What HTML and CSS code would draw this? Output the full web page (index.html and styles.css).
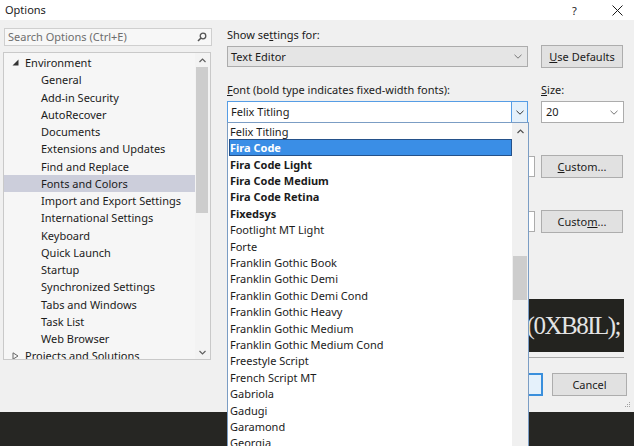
FILE: index.html
```html
<!DOCTYPE html>
<html>
<head>
<meta charset="utf-8">
<link rel="stylesheet" href="styles.css">
</head>
<body>
<div class="window">
  <div class="titlebar">
    <span class="title">Options</span>
    <span class="help">?</span>
    <svg class="close" width="11" height="11" viewBox="0 0 11 11"><path d="M0.5 0.5 L10.5 10.5 M10.5 0.5 L0.5 10.5" stroke="#1a1a1a" stroke-width="1" fill="none"/></svg>
  </div>
  <div class="main">
    <div class="left">
      <div class="search">
        <span class="placeholder">Search Options (Ctrl+E)</span>
        <svg width="10" height="10" viewBox="0 0 10 10"><circle cx="6" cy="4" r="2.8" stroke="#555" stroke-width="1.3" fill="none"/><path d="M4 6 L1 9" stroke="#555" stroke-width="1.6"/></svg>
      </div>
      <div class="tree">
        <div class="tree-list">
          <div class="node"><svg class="tri" width="7" height="7" viewBox="0 0 7 7"><path d="M6.5 0.5 L6.5 6.5 L0.5 6.5 Z" fill="#333"/></svg>Environment</div>
          <div class="leaf">General</div>
          <div class="leaf">Add-in Security</div>
          <div class="leaf">AutoRecover</div>
          <div class="leaf">Documents</div>
          <div class="leaf">Extensions and Updates</div>
          <div class="leaf">Find and Replace</div>
          <div class="leaf selected">Fonts and Colors</div>
          <div class="leaf">Import and Export Settings</div>
          <div class="leaf">International Settings</div>
          <div class="leaf">Keyboard</div>
          <div class="leaf">Quick Launch</div>
          <div class="leaf">Startup</div>
          <div class="leaf">Synchronized Settings</div>
          <div class="leaf">Tabs and Windows</div>
          <div class="leaf">Task List</div>
          <div class="leaf">Web Browser</div>
          <div class="node"><svg class="tri" width="7" height="8" viewBox="0 0 7 8"><path d="M1 0.8 L6 4 L1 7.2 Z" stroke="#666" stroke-width="1" fill="none"/></svg>Projects and Solutions</div>
        </div>
        <div class="vscroll">
          <div class="arrow"><svg width="7" height="5" viewBox="0 0 7 5"><path d="M0.5 4 L3.5 1 L6.5 4" stroke="#606060" stroke-width="1.2" fill="none"/></svg></div>
          <div class="thumb tree-thumb"></div>
          <div class="track-rest"></div>
          <div class="arrow"><svg width="7" height="5" viewBox="0 0 7 5"><path d="M0.5 1 L3.5 4 L6.5 1" stroke="#606060" stroke-width="1.2" fill="none"/></svg></div>
        </div>
      </div>
    </div>
    <div class="right">
      <div class="label l-show">Show se<u>t</u>tings for:</div>
      <div class="row r-show">
        <div class="combo readonly w-main"><span>Text Editor</span><svg class="chev" width="8" height="5" viewBox="0 0 8 5"><path d="M0.5 0.8 L4 4.2 L7.5 0.8" stroke="#777" stroke-width="1" fill="none"/></svg></div>
        <div class="button btn-side"><u>U</u>se Defaults</div>
      </div>
      <div class="row labels">
        <span class="label"><u>F</u>ont (bold type indicates fixed-width fonts):</span>
        <span class="label size-label"><u>S</u>ize:</span>
      </div>
      <div class="row r-font">
        <div class="combo focused w-main"><span>Felix Titling</span><span class="drop-btn"><svg width="8" height="5" viewBox="0 0 8 5"><path d="M0.5 0.8 L4 4.2 L7.5 0.8" stroke="#333" stroke-width="1" fill="none"/></svg></span></div>
        <div class="combo w-size"><span>20</span><svg class="chev" width="8" height="5" viewBox="0 0 8 5"><path d="M0.5 0.8 L4 4.2 L7.5 0.8" stroke="#777" stroke-width="1" fill="none"/></svg></div>
      </div>
      <div class="row r-fore">
        <div class="combo w-color"><span></span><svg class="chev" width="8" height="5" viewBox="0 0 8 5"><path d="M0.5 0.8 L4 4.2 L7.5 0.8" stroke="#777" stroke-width="1" fill="none"/></svg></div>
        <div class="button btn-side"><u>C</u>ustom...</div>
      </div>
      <div class="row r-back">
        <div class="combo w-color"><span></span><svg class="chev" width="8" height="5" viewBox="0 0 8 5"><path d="M0.5 0.8 L4 4.2 L7.5 0.8" stroke="#777" stroke-width="1" fill="none"/></svg></div>
        <div class="button btn-side">Custo<u>m</u>...</div>
      </div>
      <div class="preview"><span>(0XB8IL);</span></div>
      <div class="separator"></div>
      <div class="row dialog-buttons">
        <div class="button btn-ok">OK</div>
        <div class="button btn-cancel">Cancel</div>
      </div>
    </div>
    <svg class="grip" width="8" height="8" viewBox="0 0 8 8"><g fill="#a0a0a0"><rect x="6" y="0" width="1" height="1"/><rect x="4" y="2" width="1" height="1"/><rect x="6" y="2" width="1" height="1"/><rect x="2" y="4" width="1" height="1"/><rect x="4" y="4" width="1" height="1"/><rect x="6" y="4" width="1" height="1"/></g></svg>
  </div>
  <div class="backdrop"></div>

  <div class="dropdown">
    <div class="dd-list">
      <div class="item">Felix Titling</div>
      <div class="item bold active">Fira Code</div>
      <div class="item bold">Fira Code Light</div>
      <div class="item bold">Fira Code Medium</div>
      <div class="item bold">Fira Code Retina</div>
      <div class="item bold">Fixedsys</div>
      <div class="item">Footlight MT Light</div>
      <div class="item">Forte</div>
      <div class="item">Franklin Gothic Book</div>
      <div class="item">Franklin Gothic Demi</div>
      <div class="item">Franklin Gothic Demi Cond</div>
      <div class="item">Franklin Gothic Heavy</div>
      <div class="item">Franklin Gothic Medium</div>
      <div class="item">Franklin Gothic Medium Cond</div>
      <div class="item">Freestyle Script</div>
      <div class="item">French Script MT</div>
      <div class="item">Gabriola</div>
      <div class="item">Gadugi</div>
      <div class="item">Garamond</div>
      <div class="item">Georgia</div>
    </div>
    <div class="dd-scroll">
      <div class="arrow dd-arrow"><svg width="7" height="5" viewBox="0 0 7 5"><path d="M0.5 4 L3.5 1 L6.5 4" stroke="#505050" stroke-width="1.2" fill="none"/></svg></div>
      <div class="dd-gap"></div>
      <div class="thumb dd-thumb"></div>
    </div>
  </div>
</div>
</body>
</html>
```

FILE: styles.css
```css
* { box-sizing: border-box; }
html, body { margin: 0; padding: 0; }
body {
  width: 634px;
  height: 446px;
  overflow: hidden;
  font-family: "Noto Sans", "Open Sans", sans-serif;
  font-size: 11px;
  color: #1b1b1b;
}
u { text-decoration: underline; text-underline-offset: 1px; }

.window {
  position: relative;
  width: 634px;
  height: 446px;
  background: #f0f0f0;
  display: flex;
  flex-direction: column;
  overflow: hidden;
}

/* title bar */
.titlebar {
  height: 20px;
  flex: none;
  background: #ffffff;
  display: flex;
  align-items: center;
  padding-left: 5px;
}
.title { flex: 1; font-size: 11px; line-height: 14px; }
.help { width: 8px; font-size: 11px; margin-right: 32px; color: #1a1a1a; }
.close { margin-right: 11px; }

/* main area */
.main {
  position: relative;
  flex: none;
  height: 392px;
  display: flex;
  padding-left: 3px;
}

.left {
  width: 209px;
  flex: none;
  display: flex;
  flex-direction: column;
}
.search {
  margin-top: 8px;
  margin-left: 1px;
  width: 208px;
  height: 18px;
  border: 1px solid #cfcfcf;
  background: #f7f7f7;
  display: flex;
  align-items: center;
  padding: 0 3px 0 3px;
}
.placeholder { flex: 1; color: #6e6e6e; line-height: 14px; }
.search svg { margin-right: 1px; }

.tree {
  margin-top: 6px;
  width: 208px;
  height: 308px;
  border: 1px solid #c9c9c9;
  background: #f6f6f6;
  display: flex;
  overflow: hidden;
}
.tree-list {
  flex: 1;
  padding-top: 1px;
  overflow: hidden;
}
.node, .leaf {
  height: 17.25px;
  display: flex;
  align-items: center;
  white-space: nowrap;
}
.node { padding-left: 8px; }
.node .tri { margin-right: 6px; }
.leaf { padding-left: 37px; }
.leaf.selected { background: #cccedb; }

.vscroll {
  width: 15px;
  flex: none;
  display: flex;
  flex-direction: column;
  background: #f3f3f3;
}
.arrow {
  height: 14px;
  flex: none;
  display: flex;
  align-items: center;
  justify-content: center;
}
.thumb { background: #cdcdcd; flex: none; }
.tree-thumb { height: 146px; margin: 0 2px 0 1px; }
.track-rest { flex: 1; }

/* right column */
.right {
  width: 397px;
  flex: none;
  margin-left: 15px;
  display: flex;
  flex-direction: column;
}
.label { line-height: 16px; height: 16px; white-space: nowrap; }
.l-show { margin-top: 7px; }
.row { display: flex; align-items: center; }
.r-show { margin-top: 2px; height: 23px; justify-content: space-between; }
.labels { margin-top: 14px; height: 16px; }
.labels .label:first-child { width: 314px; flex: none; }
.size-label { padding-left: 0; }
.r-font { margin-top: 3px; height: 22px; justify-content: space-between; }
.r-fore { margin-top: 32px; height: 23px; justify-content: space-between; }
.r-back { margin-top: 32px; height: 23px; justify-content: space-between; }

.combo {
  height: 21px;
  border: 1px solid #acacac;
  background: #ffffff;
  display: flex;
  align-items: center;
  padding-left: 3px;
}
.combo span:first-child { flex: 1; line-height: 14px; }
.combo .chev { margin-right: 5px; }
.combo.readonly { background: #e5e5e5; }
.combo.focused { border-color: #569de5; height: 22px; padding-right: 0; }
.w-main { width: 301px; }
.w-size { width: 83px; padding-left: 4px; height: 22px; }
.w-color { width: 308px; background: #fff; }
.drop-btn {
  width: 16px;
  height: 100%;
  background: #e5f1fb;
  border-left: 1px solid #569de5;
  display: flex;
  align-items: center;
  justify-content: center;
}

.button {
  height: 23px;
  border: 1px solid #adadad;
  background: #e1e1e1;
  display: flex;
  align-items: center;
  justify-content: center;
  white-space: nowrap;
}
.btn-side { width: 82px; margin-right: 1px; }

.preview {
  margin-top: 66px;
  height: 53px;
  background: #23231f;
  display: flex;
  align-items: center;
  justify-content: flex-end;
  padding-right: 4px;
}
.preview span {
  font-family: "Liberation Serif", "Times New Roman", serif;
  font-size: 25px;
  letter-spacing: -1.5px;
  color: #e4e4e4;
  line-height: 30px;
}
.separator {
  margin-top: 5px;
  height: 1px;
  background: #a9a9a9;
}
.dialog-buttons {
  margin-top: 15px;
  height: 23px;
  margin-right: -3px;
  justify-content: flex-end;
  gap: 9px;
}
.btn-ok { width: 75px; border: 2px solid #3a8fdc; background: #e5f1fb; }
.btn-cancel { width: 75px; }

.grip { position: absolute; right: 3px; bottom: 2px; }

.backdrop {
  flex: 1;
  background: #262623;
}

/* open dropdown list */
.dropdown {
  position: absolute;
  left: 227px;
  top: 122px;
  width: 302px;
  height: 330px;
  border: 1px solid #7b9dc4;
  background: #ffffff;
  display: flex;
  overflow: hidden;
}
.dd-list { flex: 1; padding-left: 1px; overflow: hidden; }
.item {
  height: 16.42px;
  display: flex;
  align-items: center;
  padding-left: 1px;
  white-space: nowrap;
}
.item.bold { font-weight: 700; }
.item.active {
  background: #3a8ee6;
  color: #ffffff;
  outline: 1px solid #24518a;
  outline-offset: -1px;
}
.dd-scroll {
  width: 16px;
  flex: none;
  background: #f0f0f0;
  display: flex;
  flex-direction: column;
}
.dd-arrow { height: 17px; }
.dd-gap { height: 116px; flex: none; }
.dd-thumb { height: 44px; margin: 0 1px; }
```
